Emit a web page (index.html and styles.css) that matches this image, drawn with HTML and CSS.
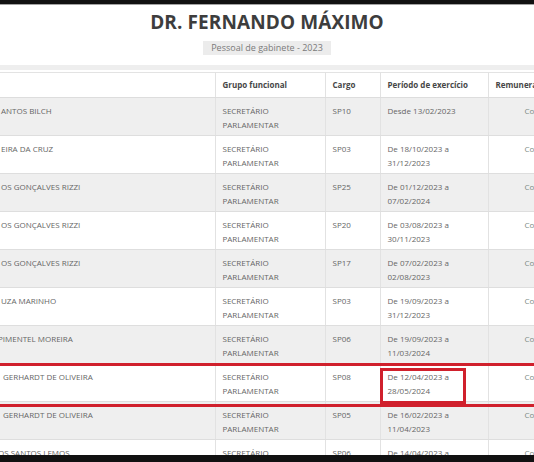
FILE: index.html
```html
<!DOCTYPE html>
<html lang="pt-BR">
<head>
<meta charset="utf-8">
<title>DR. FERNANDO MÁXIMO - Pessoal de gabinete - 2023</title>
<link rel="stylesheet" href="styles.css">
</head>
<body>
<div class="page">
  <div class="topbar"></div>
  <div class="content">
    <header class="head">
      <h1 class="title">DR. FERNANDO MÁXIMO</h1>
      <div class="subtitle">Pessoal de gabinete - 2023</div>
    </header>
    <div class="band"></div>
    <table class="staff">
      <colgroup>
        <col class="c-name"><col class="c-group"><col class="c-cargo"><col class="c-period"><col class="c-pay">
      </colgroup>
      <thead>
        <tr><th class="name"></th><th>Grupo funcional</th><th>Cargo</th><th>Período de exercício</th><th>Remuneração</th></tr>
      </thead>
      <tbody>
        <tr class="odd"><td class="name">ANTOS BILCH</td><td>SECRETÁRIO<br>PARLAMENTAR</td><td>SP10</td><td>Desde 13/02/2023</td><td class="pay">Consultar</td></tr>
        <tr><td class="name">EIRA DA CRUZ</td><td>SECRETÁRIO<br>PARLAMENTAR</td><td>SP03</td><td>De 18/10/2023 a<br>31/12/2023</td><td class="pay">Consultar</td></tr>
        <tr class="odd"><td class="name">OS GONÇALVES RIZZI</td><td>SECRETÁRIO<br>PARLAMENTAR</td><td>SP25</td><td>De 01/12/2023 a<br>07/02/2024</td><td class="pay">Consultar</td></tr>
        <tr><td class="name">OS GONÇALVES RIZZI</td><td>SECRETÁRIO<br>PARLAMENTAR</td><td>SP20</td><td>De 03/08/2023 a<br>30/11/2023</td><td class="pay">Consultar</td></tr>
        <tr class="odd"><td class="name">OS GONÇALVES RIZZI</td><td>SECRETÁRIO<br>PARLAMENTAR</td><td>SP17</td><td>De 07/02/2023 a<br>02/08/2023</td><td class="pay">Consultar</td></tr>
        <tr><td class="name">UZA MARINHO</td><td>SECRETÁRIO<br>PARLAMENTAR</td><td>SP03</td><td>De 19/09/2023 a<br>31/12/2023</td><td class="pay">Consultar</td></tr>
        <tr class="odd"><td class="name cut">PIMENTEL MOREIRA</td><td>SECRETÁRIO<br>PARLAMENTAR</td><td>SP06</td><td>De 19/09/2023 a<br>11/03/2024</td><td class="pay">Consultar</td></tr>
        <tr><td class="name gap">GERHARDT DE OLIVEIRA</td><td>SECRETÁRIO<br>PARLAMENTAR</td><td>SP08</td><td>De 12/04/2023 a<br>28/05/2024</td><td class="pay">Consultar</td></tr>
        <tr class="odd"><td class="name gap">GERHARDT DE OLIVEIRA</td><td>SECRETÁRIO<br>PARLAMENTAR</td><td>SP05</td><td>De 16/02/2023 a<br>11/04/2023</td><td class="pay">Consultar</td></tr>
        <tr><td class="name cut">OS SANTOS LEMOS</td><td>SECRETÁRIO<br>PARLAMENTAR</td><td>SP06</td><td>De 14/04/2023 a<br>30/06/2023</td><td class="pay">Consultar</td></tr>
      </tbody>
    </table>
    <div class="mark mark-row"></div>
    <div class="mark mark-cell"></div>
  </div>
  <div class="bottombar"></div>
</div>
</body>
</html>
```

FILE: styles.css
```css
html, body {
  margin: 0;
  padding: 0;
  background: #ffffff;
}

body {
  font-family: "Open Sans", "Liberation Sans", sans-serif;
  color: #666666;
}

.page {
  width: 534px;
  height: 462px;
  display: flex;
  flex-direction: column;
  overflow: hidden;
}

.topbar {
  height: 4px;
  background: #111111;
  border-bottom: 1px solid #a3a3a3;
  flex: none;
}

.bottombar {
  height: 7px;
  background: #111111;
  flex: none;
}

.content {
  flex: 1;
  overflow: hidden;
  position: relative;
}

.head {
  display: flex;
  flex-direction: column;
  align-items: center;
  padding-top: 4px;
}

.title {
  margin: 0;
  font-size: 19px;
  line-height: 26px;
  font-weight: 700;
  color: #3d3d3d;
  letter-spacing: 0.1px;
}

.subtitle {
  margin-top: 6px;
  background: #ececec;
  padding: 0 8px;
  font-size: 9px;
  line-height: 14px;
  color: #7a7a7a;
}

.band {
  margin-top: 10px;
  height: 5px;
  background: #eeeeee;
}

.staff {
  margin-top: 2px;
  border-collapse: collapse;
  table-layout: fixed;
  width: 620px;
  border-top: 1px solid #e3e3e3;
  font-size: 8px;
}

.c-name { width: 215px; }
.c-group { width: 110px; }
.c-cargo { width: 55px; }
.c-period { width: 108px; }
.c-pay { width: 132px; }

.staff th {
  text-align: left;
  font-weight: 700;
  color: #474747;
  padding: 0 7px;
  line-height: 24px;
  border-bottom: 1px solid #dddddd;
  border-left: 1px solid #e2e2e2;
  white-space: nowrap;
  overflow: hidden;
  background: #ffffff;
}

.staff td {
  vertical-align: top;
  padding: 6px 7px 3px;
  line-height: 14px;
  border-bottom: 1px solid #dedede;
  border-left: 1px solid #e2e2e2;
  white-space: nowrap;
  overflow: hidden;
}

.staff th.name,
.staff td.name {
  border-left: none;
  padding-left: 1px;
}

.staff td.name.gap {
  padding-left: 3px;
}

.staff td.name.cut {
  text-indent: -3px;
}

.staff tr.odd td {
  background: #efefef;
}

.staff td.pay {
  padding-left: 36px;
  color: #7d8a83;
}

.mark {
  position: absolute;
  border: 3px solid #d0202c;
  box-sizing: border-box;
  pointer-events: none;
}

.mark-row {
  left: -6px;
  top: 358px;
  width: 560px;
  height: 44px;
}

.mark-cell {
  left: 380px;
  top: 363px;
  width: 86px;
  height: 36px;
}
```
